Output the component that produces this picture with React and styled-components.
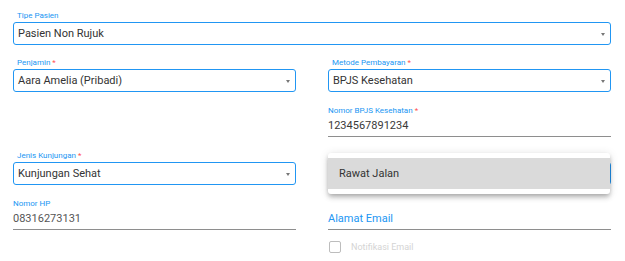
import React from "react";
import styled, { createGlobalStyle } from "styled-components";

const GlobalStyle = createGlobalStyle`
  body {
    margin: 0;
    background: #fff;
    font-family: Roboto, "Liberation Sans", sans-serif;
  }
`;

const Page = styled.div`
  width: 598px;
  padding: 11px 0 0 13px;
`;

const Grid = styled.div`
  display: grid;
  grid-template-columns: 283px 283px;
  column-gap: 32px;
  row-gap: 14px;
`;

const Full = styled.div`
  grid-column: 1 / span 2;
  margin-bottom: -1px;
`;

const Cell = styled.div`
  position: relative;
  display: flex;
  flex-direction: column;
`;

const Label = styled.div`
  height: 10px;
  line-height: 10px;
  font-size: 8px;
  color: #2196f3;
  padding-left: ${(p) => (p.$indent ? "4px" : "0")};
  white-space: nowrap;
`;

const Req = styled.span`
  color: #ff5252;
  margin-left: 2px;
`;

const Box = styled.div`
  margin-top: 1px;
  height: 23px;
  box-sizing: border-box;
  border: 1px solid #2196f3;
  border-radius: 3px;
  display: flex;
  align-items: center;
  justify-content: space-between;
  padding: 0 5px 0 4px;
  font-size: 11px;
  color: #333;
`;

const Arrow = styled.span`
  width: 0;
  height: 0;
  margin-top: 2px;
  border-left: 2.5px solid transparent;
  border-right: 2.5px solid transparent;
  border-top: 3px solid #777;
`;

const Line = styled.div`
  height: 20px;
  line-height: 20px;
  font-size: 11px;
  color: ${(p) => p.$color || "#444"};
  border-bottom: 1px solid #8e8e8e;
`;

const Menu = styled.div`
  position: absolute;
  top: 2px;
  left: 0;
  right: 1px;
  padding: 5px 0;
  background: #fff;
  border-radius: 3px;
  box-shadow: 0 2px 4px -1px rgba(0, 0, 0, 0.2), 0 4px 5px 0 rgba(0, 0, 0, 0.14),
    0 1px 10px 0 rgba(0, 0, 0, 0.12);
  z-index: 2;
`;

const MenuItem = styled.div`
  height: 31px;
  line-height: 31px;
  padding-left: 11px;
  background: #dadada;
  font-size: 11px;
  color: #333;
`;

const CheckRow = styled.div`
  grid-column: 2;
  margin-top: -3px;
  display: flex;
  align-items: center;
  gap: 10px;
  padding-left: 1px;
`;

const CheckBox = styled.span`
  width: 12px;
  height: 12px;
  box-sizing: border-box;
  border: 1px solid #bdbdbd;
  border-radius: 2px;
`;

const CheckLabel = styled.span`
  font-size: 9px;
  color: #d4d4d4;
`;

const SelectField = ({ label, required, value }) => (
  <>
    <Label $indent>
      {label}
      {required && <Req>*</Req>}
    </Label>
    <Box>
      <span>{value}</span>
      <Arrow />
    </Box>
  </>
);

const TextField = ({ label, required, value, color }) => (
  <>
    <Label>
      {label}
      {required && <Req>*</Req>}
    </Label>
    <Line $color={color}>{value}</Line>
  </>
);

export default function App() {
  return (
    <Page>
      <GlobalStyle />
      <Grid>
        <Full>
          <SelectField label="Tipe Pasien" value="Pasien Non Rujuk" />
        </Full>
        <Cell>
          <SelectField label="Penjamin" required value="Aara Amelia (Pribadi)" />
        </Cell>
        <Cell>
          <SelectField label="Metode Pembayaran" required value="BPJS Kesehatan" />
        </Cell>
        <Cell />
        <Cell>
          <TextField label="Nomor BPJS Kesehatan" required value="1234567891234" color="#3a3a3a" />
        </Cell>
        <Cell>
          <SelectField label="Jenis Kunjungan" required value="Kunjungan Sehat" />
        </Cell>
        <Cell>
          <SelectField label="Jenis Pasien" required value="" />
          <Menu>
            <MenuItem>Rawat Jalan</MenuItem>
          </Menu>
        </Cell>
        <Cell>
          <TextField label="Nomor HP" value="08316273131" color="#555" />
        </Cell>
        <Cell>
          <TextField label="" value="Alamat Email" color="#2196f3" />
        </Cell>
        <CheckRow>
          <CheckBox />
          <CheckLabel>Notifikasi Email</CheckLabel>
        </CheckRow>
      </Grid>
    </Page>
  );
}
